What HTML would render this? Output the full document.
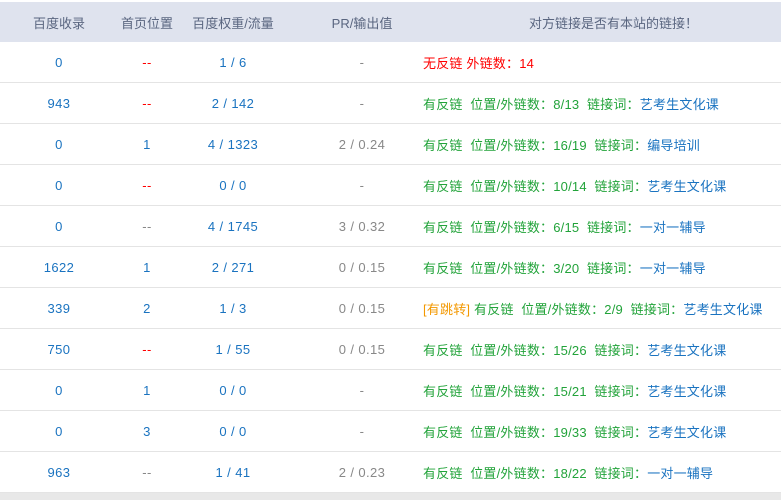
<!DOCTYPE html>
<html><head><meta charset="utf-8"><style>
body{margin:0;width:781px;height:500px;background:#e8e8e8;font-family:"Liberation Sans","Noto Sans CJK SC",sans-serif;font-size:13px;overflow:hidden}
.top{height:2px;background:#fff}
table{border-collapse:collapse;width:781px;background:#fff;table-layout:fixed}
th{background:#dfe3ee;height:40px;font-weight:normal;color:#5a6680;font-size:13px;padding:0}
td{height:40px;border-bottom:1px solid #e4e4e4;text-align:center;color:#1a73c0;padding:0;white-space:nowrap;letter-spacing:0.4px}
td.l{text-align:left;text-indent:-11px;color:#22a33a;letter-spacing:0.2px}
td.r,td.l.r{color:#f00}.g{color:#888}.o{color:#f39800}.b{color:#1a73c0}
</style></head><body><div class="top"></div>
<table>
<colgroup><col style="width:118px"><col style="width:58px"><col style="width:114px"><col style="width:144px"><col></colgroup>
<tr><th>百度收录</th><th>首页位置</th><th>百度权重/流量</th><th>PR/输出值</th><th style="padding-left:12px">对方链接是否有本站的链接！</th></tr>
<tr><td>0</td><td class="r">--</td><td>1 / 6</td><td class="g">-</td><td class="l r">无反链 外链数：14</td></tr>
<tr><td>943</td><td class="r">--</td><td>2 / 142</td><td class="g">-</td><td class="l">有反链&nbsp; 位置/外链数：8/13&nbsp; 链接词：<span class="b">艺考生文化课</span></td></tr>
<tr><td>0</td><td>1</td><td>4 / 1323</td><td class="g">2 / 0.24</td><td class="l">有反链&nbsp; 位置/外链数：16/19&nbsp; 链接词：<span class="b">编导培训</span></td></tr>
<tr><td>0</td><td class="r">--</td><td>0 / 0</td><td class="g">-</td><td class="l">有反链&nbsp; 位置/外链数：10/14&nbsp; 链接词：<span class="b">艺考生文化课</span></td></tr>
<tr><td>0</td><td class="g">--</td><td>4 / 1745</td><td class="g">3 / 0.32</td><td class="l">有反链&nbsp; 位置/外链数：6/15&nbsp; 链接词：<span class="b">一对一辅导</span></td></tr>
<tr><td>1622</td><td>1</td><td>2 / 271</td><td class="g">0 / 0.15</td><td class="l">有反链&nbsp; 位置/外链数：3/20&nbsp; 链接词：<span class="b">一对一辅导</span></td></tr>
<tr><td>339</td><td>2</td><td>1 / 3</td><td class="g">0 / 0.15</td><td class="l"><span class="o">[有跳转]</span> 有反链&nbsp; 位置/外链数：2/9&nbsp; 链接词：<span class="b">艺考生文化课</span></td></tr>
<tr><td>750</td><td class="r">--</td><td>1 / 55</td><td class="g">0 / 0.15</td><td class="l">有反链&nbsp; 位置/外链数：15/26&nbsp; 链接词：<span class="b">艺考生文化课</span></td></tr>
<tr><td>0</td><td>1</td><td>0 / 0</td><td class="g">-</td><td class="l">有反链&nbsp; 位置/外链数：15/21&nbsp; 链接词：<span class="b">艺考生文化课</span></td></tr>
<tr><td>0</td><td>3</td><td>0 / 0</td><td class="g">-</td><td class="l">有反链&nbsp; 位置/外链数：19/33&nbsp; 链接词：<span class="b">艺考生文化课</span></td></tr>
<tr><td>963</td><td class="g">--</td><td>1 / 41</td><td class="g">2 / 0.23</td><td class="l">有反链&nbsp; 位置/外链数：18/22&nbsp; 链接词：<span class="b">一对一辅导</span></td></tr>
</table></body></html>
